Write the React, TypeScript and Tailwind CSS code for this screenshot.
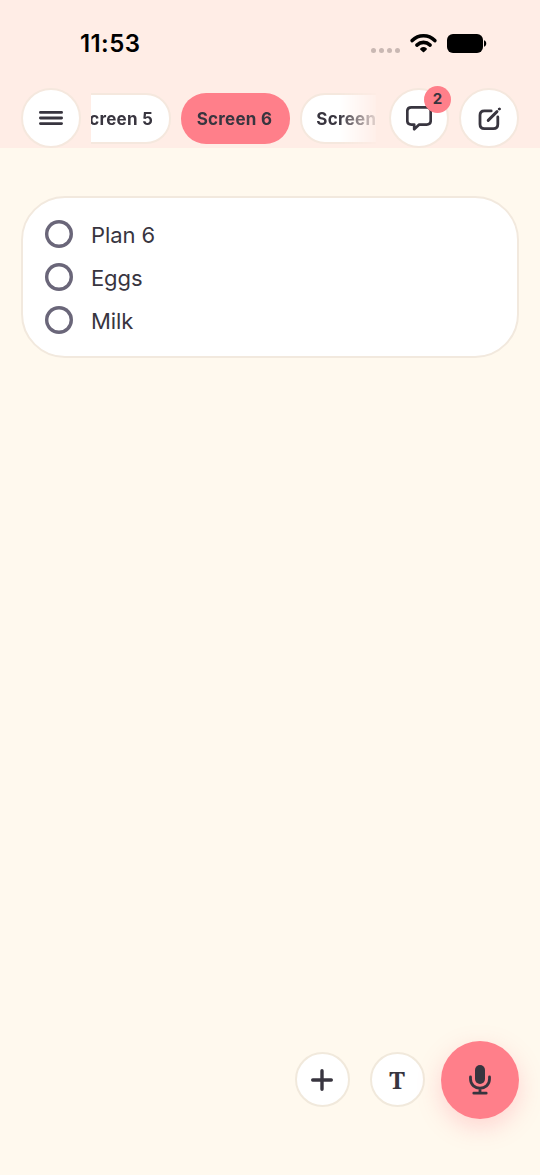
import type { ReactNode } from 'react'

const tasks = ['Plan 6', 'Eggs', 'Milk']

export default function App() {
  return (
    <div className="flex h-[1175px] w-[540px] flex-col overflow-hidden bg-[#fff9ee] font-['Inter',sans-serif] text-[#38353f]">
      <header className="h-[148px] bg-[#ffede6]">
        <StatusBar />
        <div className="flex items-center gap-[10px] px-[21px]">
          <RoundButton label="Menu">
            <MenuIcon />
          </RoundButton>
          <ScreenTabs />
          <div className="relative">
            <RoundButton label="Messages">
              <ChatIcon />
            </RoundButton>
            <span className="absolute top-[-2px] right-[-2px] flex size-[27px] items-center justify-center rounded-full bg-[#ff7f8a] text-[15px] font-bold">
              2
            </span>
          </div>
          <RoundButton label="New note">
            <ComposeIcon />
          </RoundButton>
        </div>
      </header>

      <main className="flex-1 px-[21px] pt-[48px]">
        <ul className="h-[162px] rounded-[44px] border-2 border-[#f2e9de] bg-white px-[22px] pt-[15px]">
          {tasks.map((task) => (
            <li key={task} className="flex h-[43px] items-center gap-[18px]">
              <span className="-mt-[2px] size-[28px] rounded-full shadow-[inset_0_0_0_3.4px_#6a6679]" />
              <span className="pt-px text-[22px] leading-none tracking-[-0.1px]">{task}</span>
            </li>
          ))}
        </ul>
      </main>

      <footer className="flex items-center justify-end pr-[21.5px] pb-[56.5px]">
        <button aria-label="Add" className="mr-5 flex size-[55px] items-center justify-center rounded-full border-2 border-[#f1e9dc] bg-white">
          <PlusIcon />
        </button>
        <button aria-label="Text" className="mr-4 flex size-[55px] items-center justify-center rounded-full border-2 border-[#f1e9dc] bg-white font-['Noto_Serif','Liberation_Serif',serif] text-[24px] font-bold">
          T
        </button>
        <button aria-label="Record" className="flex size-[78px] items-center justify-center rounded-full bg-[#ff7f8a] shadow-[0_8px_24px_rgba(255,127,138,0.3)]">
          <MicIcon />
        </button>
      </footer>
    </div>
  )
}

function StatusBar() {
  return (
    <div className="flex h-[88px] items-center justify-between pr-[53px] pl-[80px]">
      <span className="text-[24px] font-semibold tracking-[0.4px] text-black">11:53</span>
      <div className="flex items-center">
        <div className="mt-[13px] mr-[10px] flex gap-[3px]">
          <i className="size-[5px] rounded-full bg-[#c9b8b3]" />
          <i className="size-[5px] rounded-full bg-[#c9b8b3]" />
          <i className="size-[5px] rounded-full bg-[#c9b8b3]" />
          <i className="size-[5px] rounded-full bg-[#c9b8b3]" />
        </div>
        <svg className="-mt-[2px]" width="27" height="20" viewBox="0 0 27 20" fill="none" stroke="#000" strokeWidth="3.6" strokeLinecap="round">
          <path d="M2.2 7.6C8.4 1.2 18.6 1.2 24.8 7.6" />
          <path d="M6.9 12.1C10.8 8.5 16.2 8.5 20.1 12.1" />
          <path d="M13.5 18.3L11 16C12.4 14.9 14.6 14.9 16 16Z" fill="#000" stroke="#000" strokeWidth="1.8" strokeLinejoin="round" />
        </svg>
        <svg className="-mt-[2px] ml-[10px]" width="40" height="19" viewBox="0 0 40 19">
          <rect width="36" height="19" rx="6" />
          <path d="M37 6.2C40 7 40 12 37 12.8Z" />
        </svg>
      </div>
    </div>
  )
}

// Horizontally scrolled tab strip, faded out at its right end
function ScreenTabs() {
  return (
    <div className="mr-[3px] flex h-[52px] w-[285px] shrink-0 items-center overflow-hidden [mask-image:linear-gradient(to_right,#000_87%,transparent_102%)]">
      <div className="-ml-[29px] flex shrink-0 items-center gap-[10px] text-[17px] font-bold tracking-[0.25px]">
        <Tab>Screen 5</Tab>
        <Tab active>Screen 6</Tab>
        <Tab>Screen 7</Tab>
      </div>
    </div>
  )
}

function Tab({ active, children }: { active?: boolean; children: ReactNode }) {
  return (
    <span
      className={`flex h-[51px] w-[109px] shrink-0 items-center justify-center rounded-[25px] pt-[3px] pr-0.5 whitespace-nowrap ${
        active ? 'bg-[#ff7f8a]' : 'border-2 border-[#f5e8de] bg-white'
      }`}
    >
      {children}
    </span>
  )
}

function RoundButton({ label, children }: { label: string; children: ReactNode }) {
  return (
    <button aria-label={label} className="flex size-[60px] shrink-0 items-center justify-center rounded-full border-2 border-[#f5e8de] bg-white">
      {children}
    </button>
  )
}

function MenuIcon() {
  return (
    <svg width="24" height="14" viewBox="0 0 24 14" stroke="currentColor" strokeWidth="2.8" strokeLinecap="round">
      <path d="M1.4 1.4H22.6M1.4 7H22.6M1.4 12.6H22.6" />
    </svg>
  )
}

function ChatIcon() {
  return (
    <svg width="26" height="26" viewBox="0 0 26 26" fill="none" stroke="currentColor" strokeWidth="2.7" strokeLinejoin="round">
      <path d="M5.3 2.3H20.7Q24.7 2.3 24.7 6.3V15.6Q24.7 19.6 20.7 19.6H13.2L8.2 24.2V19.6H5.3Q1.3 19.6 1.3 15.6V6.3Q1.3 2.3 5.3 2.3Z" />
    </svg>
  )
}

function ComposeIcon() {
  return (
    <svg width="24" height="24" viewBox="0 0 24 24" fill="none" stroke="currentColor" strokeWidth="2.8" strokeLinecap="round">
      <path d="M14.2 4.9H7.4Q3 4.9 3 9.3V18.2Q3 22.6 7.4 22.6H16.4Q20.8 22.6 20.8 18.2V11" />
      <path d="M11.2 14.4L20 5.6" strokeWidth="2.9" />
      <path d="M22.3 3.1L22.5 2.9" strokeWidth="2.8" />
    </svg>
  )
}

function PlusIcon() {
  return (
    <svg width="22" height="22" viewBox="0 0 22 22" stroke="currentColor" strokeWidth="3.4" strokeLinecap="round">
      <path d="M11 1.7V20.3M1.7 11H20.3" />
    </svg>
  )
}

function MicIcon() {
  return (
    <svg width="22" height="30" viewBox="0 0 22 30" fill="none" stroke="currentColor" strokeWidth="2.8" strokeLinecap="round">
      <rect x="6" width="10" height="19" rx="5" fill="currentColor" stroke="none" />
      <path d="M1.5 12V14C1.5 26.3 20.5 26.3 20.5 14V12M11 23.3V28M4.8 28.2H17.2" />
    </svg>
  )
}
